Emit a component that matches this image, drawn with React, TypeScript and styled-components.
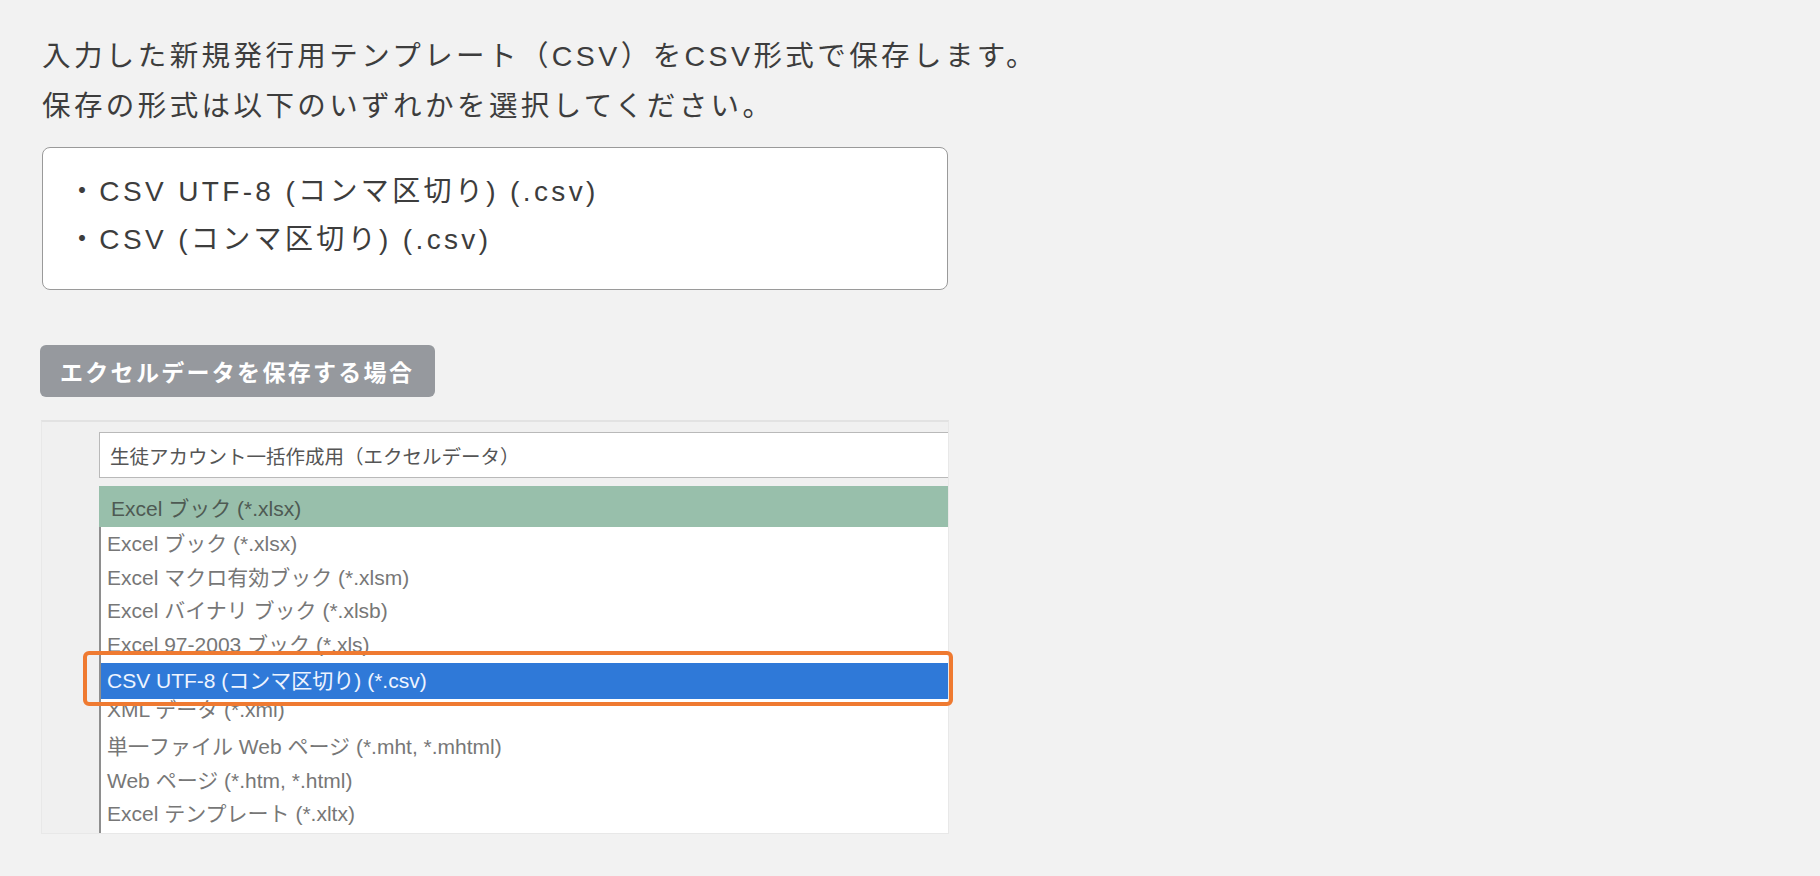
import React from "react";
import styled, { createGlobalStyle } from "styled-components";

const GlobalStyle = createGlobalStyle`
  html, body {
    margin: 0;
    padding: 0;
    background: #f2f2f2;
  }
  body {
    font-family: "Liberation Sans", "Noto Sans CJK JP", sans-serif;
    color: #3d3d3d;
  }
`;

const Page = styled.main`
  padding: 31px 0 40px 42px;
`;

const Lead = styled.p`
  margin: 0;
  font-size: 28.5px;
  line-height: 50px;
  letter-spacing: 0.12em;
  color: #3d3d3d;
  white-space: nowrap;
`;

const NoteBox = styled.ul`
  list-style: none;
  margin: 16px 0 0;
  padding: 20px 24px 25px 25px;
  width: 906px;
  box-sizing: border-box;
  background: #fff;
  border: 1.5px solid #9a9a9a;
  border-radius: 8px;
`;

const NoteItem = styled.li`
  font-size: 28px;
  line-height: 48px;
  letter-spacing: 0.12em;
  color: #3d3d3d;
  white-space: nowrap;
`;

const Tag = styled.div`
  display: inline-flex;
  align-items: center;
  margin: 55px 0 0 -2px;
  height: 52px;
  padding: 0 21px 0 20px;
  background: #96999e;
  border-radius: 6px;
  color: #fff;
  font-size: 23px;
  font-weight: 700;
  letter-spacing: 0.1em;
`;

const Shot = styled.figure`
  position: relative;
  margin: 23px 0 0 -1px;
  width: 908px;
  height: 414px;
`;

const ShotFrame = styled.div`
  display: flex;
  flex-direction: column;
  height: 100%;
  box-sizing: border-box;
  padding: 10px 0 0 57px;
  background: #f0f0f0;
  border-top: 2px solid #e2e2e2;
  border-left: 1px solid #e8e8e8;
  border-right: 1px solid #e8e8e8;
  border-bottom: 1px solid #e8e8e8;
  overflow: hidden;
`;

const FileName = styled.div`
  height: 46px;
  box-sizing: border-box;
  display: flex;
  align-items: center;
  padding-left: 10px;
  background: #fff;
  border: 1.5px solid #b9b9b9;
  border-right: none;
  font-family: "Noto Sans CJK JP", sans-serif;
  font-size: 19.5px;
  color: #555;
`;

const TypeSelect = styled.div`
  margin-top: 8px;
  height: 41px;
  display: flex;
  align-items: center;
  padding-left: 12px;
  background: #98bfab;
  font-size: 21px;
  color: #4e5a53;
`;

const TypeList = styled.ul`
  flex: 1;
  list-style: none;
  margin: 0;
  padding: 0;
  background: #fff;
  border-left: 2px solid #8e8e8e;
  overflow: hidden;
`;

const TypeRow = styled.li<{ $clip?: number; $shift?: number; $selected?: boolean }>`
  height: ${p => (p.$clip ?? 33.5) + "px"};
  overflow: hidden;
  margin-top: ${p => (p.$selected ? "4px" : "0")};
  background: ${p => (p.$selected ? "#2f79d8" : "transparent")};
  font-size: 21px;
  color: ${p => (p.$selected ? "#eef4ff" : "#777")};
  white-space: nowrap;

  & > span {
    display: block;
    padding-left: 6px;
    line-height: ${p => (p.$selected ? "36px" : "33.5px")};
    margin-top: ${p => (p.$shift ?? 0) + "px"};
  }
`;

const Highlight = styled.div`
  position: absolute;
  left: 42px;
  top: 231px;
  width: 870px;
  height: 55px;
  box-sizing: border-box;
  border: 4px solid #ef7a31;
  border-radius: 6px;
  pointer-events: none;
`;

const fileTypes: { label: string; clip?: number; shift?: number; selected?: boolean }[] = [
  { label: "Excel ブック (*.xlsx)" },
  { label: "Excel マクロ有効ブック (*.xlsm)" },
  { label: "Excel バイナリ ブック (*.xlsb)" },
  { label: "Excel 97-2003 ブック (*.xls)", clip: 31.5 },
  { label: "CSV UTF-8 (コンマ区切り) (*.csv)", clip: 36, selected: true },
  { label: "XML データ (*.xml)", clip: 31, shift: -6 },
  { label: "単一ファイル Web ページ (*.mht, *.mhtml)" },
  { label: "Web ページ (*.htm, *.html)" },
  { label: "Excel テンプレート (*.xltx)" },
];

export default function App() {
  return (
    <>
      <GlobalStyle />
      <Page>
        <Lead>
          入力した新規発行用テンプレート（CSV）をCSV形式で保存します。
          <br />
          保存の形式は以下のいずれかを選択してください。
        </Lead>
        <NoteBox>
          <NoteItem>・CSV UTF-8 (コンマ区切り) (.csv)</NoteItem>
          <NoteItem>・CSV (コンマ区切り) (.csv)</NoteItem>
        </NoteBox>
        <Tag>エクセルデータを保存する場合</Tag>
        <Shot>
          <ShotFrame>
            <FileName>生徒アカウント一括作成用（エクセルデータ）</FileName>
            <TypeSelect>Excel ブック (*.xlsx)</TypeSelect>
            <TypeList>
              {fileTypes.map(t => (
                <TypeRow key={t.label} $clip={t.clip} $shift={t.shift} $selected={t.selected}>
                  <span>{t.label}</span>
                </TypeRow>
              ))}
            </TypeList>
          </ShotFrame>
          <Highlight />
        </Shot>
      </Page>
    </>
  );
}
